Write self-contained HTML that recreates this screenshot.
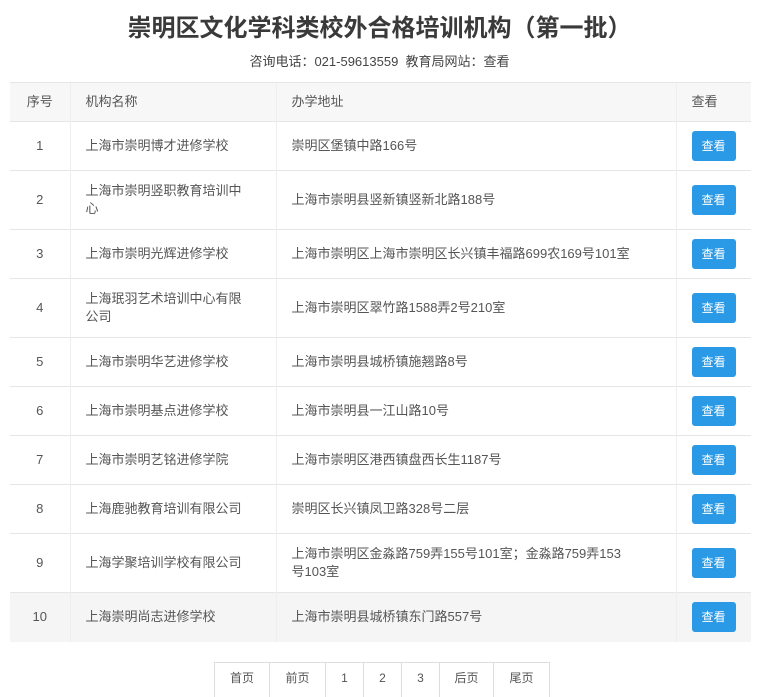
<!DOCTYPE html>
<html><head><meta charset="utf-8"><style>
body{margin:0;background:#fff;font-family:"Liberation Sans","Noto Sans CJK SC",sans-serif;color:#555;width:759px;height:695px;overflow:hidden;position:relative}
h1{position:absolute;top:11px;left:0;width:759px;text-align:center;margin:0;font-size:24px;font-weight:bold;color:#3a3a3a;line-height:36px}
.sub{position:absolute;top:52px;left:0;width:759px;text-align:center;font-size:13px;color:#444;line-height:20px}
table{position:absolute;top:82px;left:10px;width:741px;border-collapse:collapse;font-size:13px;table-layout:fixed}
td,th{border-top:1px solid #e6e6e6;border-left:1px solid #eee;padding:0 0 0 15px;text-align:left;font-weight:normal;line-height:18px}
td:first-child,th:first-child{border-left:none;text-align:center;padding:0}
th{background:#f7f7f7;height:38px;color:#555}
tr.g{background:#f5f5f5}
.b{display:inline-block;width:44px;height:30px;line-height:30px;text-align:center;background:#2b9ae6;color:#fff;border-radius:3px;font-size:12px}
.pg{position:absolute;top:662px;left:214px;display:flex;border:1px solid #ddd;border-bottom:none;height:34px;font-size:12px}
.pg span{border-left:1px solid #ddd;line-height:30px;text-align:center}
.pg span:first-child{border-left:none}
</style></head><body>
<h1>崇明区文化学科类校外合格培训机构（第一批）</h1>
<div class="sub">咨询电话：021-59613559 &nbsp;教育局网站：查看</div>
<table>
<colgroup><col style="width:60px"><col style="width:206px"><col style="width:400px"><col style="width:75px"></colgroup>
<tr><th>序号</th><th>机构名称</th><th>办学地址</th><th>查看</th></tr>
<tr style="height:49px"><td>1</td><td>上海市崇明博才进修学校</td><td>崇明区堡镇中路166号</td><td><span class="b">查看</span></td></tr>
<tr style="height:59px"><td>2</td><td>上海市崇明竖职教育培训中<br>心</td><td>上海市崇明县竖新镇竖新北路188号</td><td><span class="b">查看</span></td></tr>
<tr style="height:49px"><td>3</td><td>上海市崇明光辉进修学校</td><td>上海市崇明区上海市崇明区长兴镇丰福路699农169号101室</td><td><span class="b">查看</span></td></tr>
<tr style="height:59px"><td>4</td><td>上海珉羽艺术培训中心有限<br>公司</td><td>上海市崇明区翠竹路1588弄2号210室</td><td><span class="b">查看</span></td></tr>
<tr style="height:49px"><td>5</td><td>上海市崇明华艺进修学校</td><td>上海市崇明县城桥镇施翘路8号</td><td><span class="b">查看</span></td></tr>
<tr style="height:49px"><td>6</td><td>上海市崇明基点进修学校</td><td>上海市崇明县一江山路10号</td><td><span class="b">查看</span></td></tr>
<tr style="height:49px"><td>7</td><td>上海市崇明艺铭进修学院</td><td>上海市崇明区港西镇盘西长生1187号</td><td><span class="b">查看</span></td></tr>
<tr style="height:49px"><td>8</td><td>上海鹿驰教育培训有限公司</td><td>崇明区长兴镇凤卫路328号二层</td><td><span class="b">查看</span></td></tr>
<tr style="height:59px"><td>9</td><td>上海学聚培训学校有限公司</td><td>上海市崇明区金淼路759弄155号101室；金淼路759弄153<br>号103室</td><td><span class="b">查看</span></td></tr>
<tr class="g" style="height:49px"><td>10</td><td>上海崇明尚志进修学校</td><td>上海市崇明县城桥镇东门路557号</td><td><span class="b">查看</span></td></tr>
</table>
<div class="pg"><span style="width:54px">首页</span><span style="width:55px">前页</span><span style="width:37px">1</span><span style="width:37px">2</span><span style="width:37px">3</span><span style="width:53px">后页</span><span style="width:55px">尾页</span></div>
</body></html>
